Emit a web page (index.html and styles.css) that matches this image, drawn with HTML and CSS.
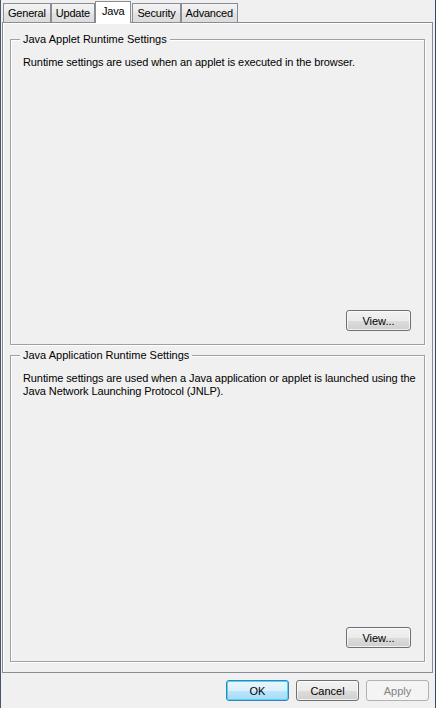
FILE: index.html
```html
<!DOCTYPE html>
<html>
<head>
<meta charset="utf-8">
<link rel="stylesheet" href="styles.css">
</head>
<body>
<div class="window">
  <div class="tabs">
    <div class="tab">General</div>
    <div class="tab">Update</div>
    <div class="tab selected">Java</div>
    <div class="tab">Security</div>
    <div class="tab">Advanced</div>
  </div>
  <div class="panel">
    <section class="group first">
      <div class="group-title">Java Applet Runtime Settings</div>
      <p class="desc">Runtime settings are used when an applet is executed in the browser.</p>
      <div class="spacer"></div>
      <div class="group-actions"><button class="btn">View...</button></div>
    </section>
    <section class="group second">
      <div class="group-title">Java Application Runtime Settings</div>
      <p class="desc">Runtime settings are used when a Java application or applet is launched using the Java Network Launching Protocol (JNLP).</p>
      <div class="spacer"></div>
      <div class="group-actions"><button class="btn">View...</button></div>
    </section>
  </div>
  <div class="footer">
    <button class="btn default">OK</button>
    <button class="btn">Cancel</button>
    <button class="btn disabled">Apply</button>
  </div>
</div>
</body>
</html>
```
FILE: styles.css
```css
html, body {
  margin: 0;
  padding: 0;
  background: #f0f0f0;
}
body {
  font-family: "Liberation Sans", Arial, sans-serif;
  font-size: 11px;
  color: #000;
}
.window {
  width: 436px;
  height: 708px;
  box-sizing: border-box;
  border-left: 1px solid #4a5568;
  border-right: 1px solid #34496e;
  background: #f0f0f0;
  display: flex;
  flex-direction: column;
}
.tabs {
  height: 22px;
  display: flex;
  align-items: flex-end;
  padding-left: 2px;
  position: relative;
  z-index: 2;
}
.tab {
  box-sizing: border-box;
  height: 19px;
  border: 1px solid #898c95;
  border-bottom: none;
  background: linear-gradient(#f4f4f4, #e9e9e9 50%, #e2e2e2 51%, #dcdcdc);
  padding: 0 4px;
  letter-spacing: -0.2px;
  line-height: 18px;
  margin-right: 0;
}
.tab.selected {
  height: 22px;
  margin-bottom: -1px;
  background: #ffffff;
  line-height: 19px;
  padding: 0 6px;
  margin-left: 0;
  margin-right: 1px;
  position: relative;
}
.panel {
  flex: none;
  height: 651px;
  box-sizing: border-box;
  margin: 0 2px 0 1px;
  border: 1px solid #898c95;
  box-shadow: inset 1px 1px 0 #fff;
  padding: 16px 7px 10px 7px;
  display: flex;
  flex-direction: column;
}
.group {
  position: relative;
  box-sizing: border-box;
  border: 1px solid #a0a0a0;
  box-shadow: inset 1px 1px 0 #fff, 1px 1px 0 #fff;
  padding: 16px 2px 12px 12px;
  display: flex;
  flex-direction: column;
}
.group.first { height: 306px; }
.group.second { height: 307px; margin-top: 10px; }
.group-title {
  position: absolute;
  top: -8px;
  left: 9px;
  padding: 0 3px;
  background: #f0f0f0;
  line-height: 14px;
}
.desc {
  margin: 0;
  line-height: 13px;
  letter-spacing: -0.1px;
}
.spacer { flex: 1; }
.group-actions {
  display: flex;
  justify-content: flex-end;
  padding-right: 11px;
}
.btn {
  font-family: "Liberation Sans", Arial, sans-serif;
  font-size: 11px;
  color: #000;
  width: 65px;
  height: 21px;
  box-sizing: border-box;
  border: 1px solid #707070;
  border-radius: 3px;
  background: linear-gradient(#f2f2f2, #ebebeb 50%, #dddddd 51%, #cfcfcf);
  box-shadow: inset 0 0 0 1px rgba(255,255,255,0.7);
  padding: 0;
  margin: 0;
}
.group-actions .btn { margin-bottom: 1px; }
.footer {
  flex: 1;
  display: flex;
  justify-content: flex-end;
  align-items: flex-start;
  padding-top: 7px;
  padding-right: 6px;
  gap: 7px;
}
.footer .btn { width: 63px; }
.btn.default {
  border-color: #3c7fb1;
  background: linear-gradient(#eaf6fd, #d9f0fc 50%, #bee6fd 51%, #a7d9f5);
  box-shadow: inset 0 0 0 1px #48d8fb;
}
.btn.disabled {
  border-color: #adb2b5;
  background: #f4f4f4;
  color: #838383;
  box-shadow: none;
}
```
